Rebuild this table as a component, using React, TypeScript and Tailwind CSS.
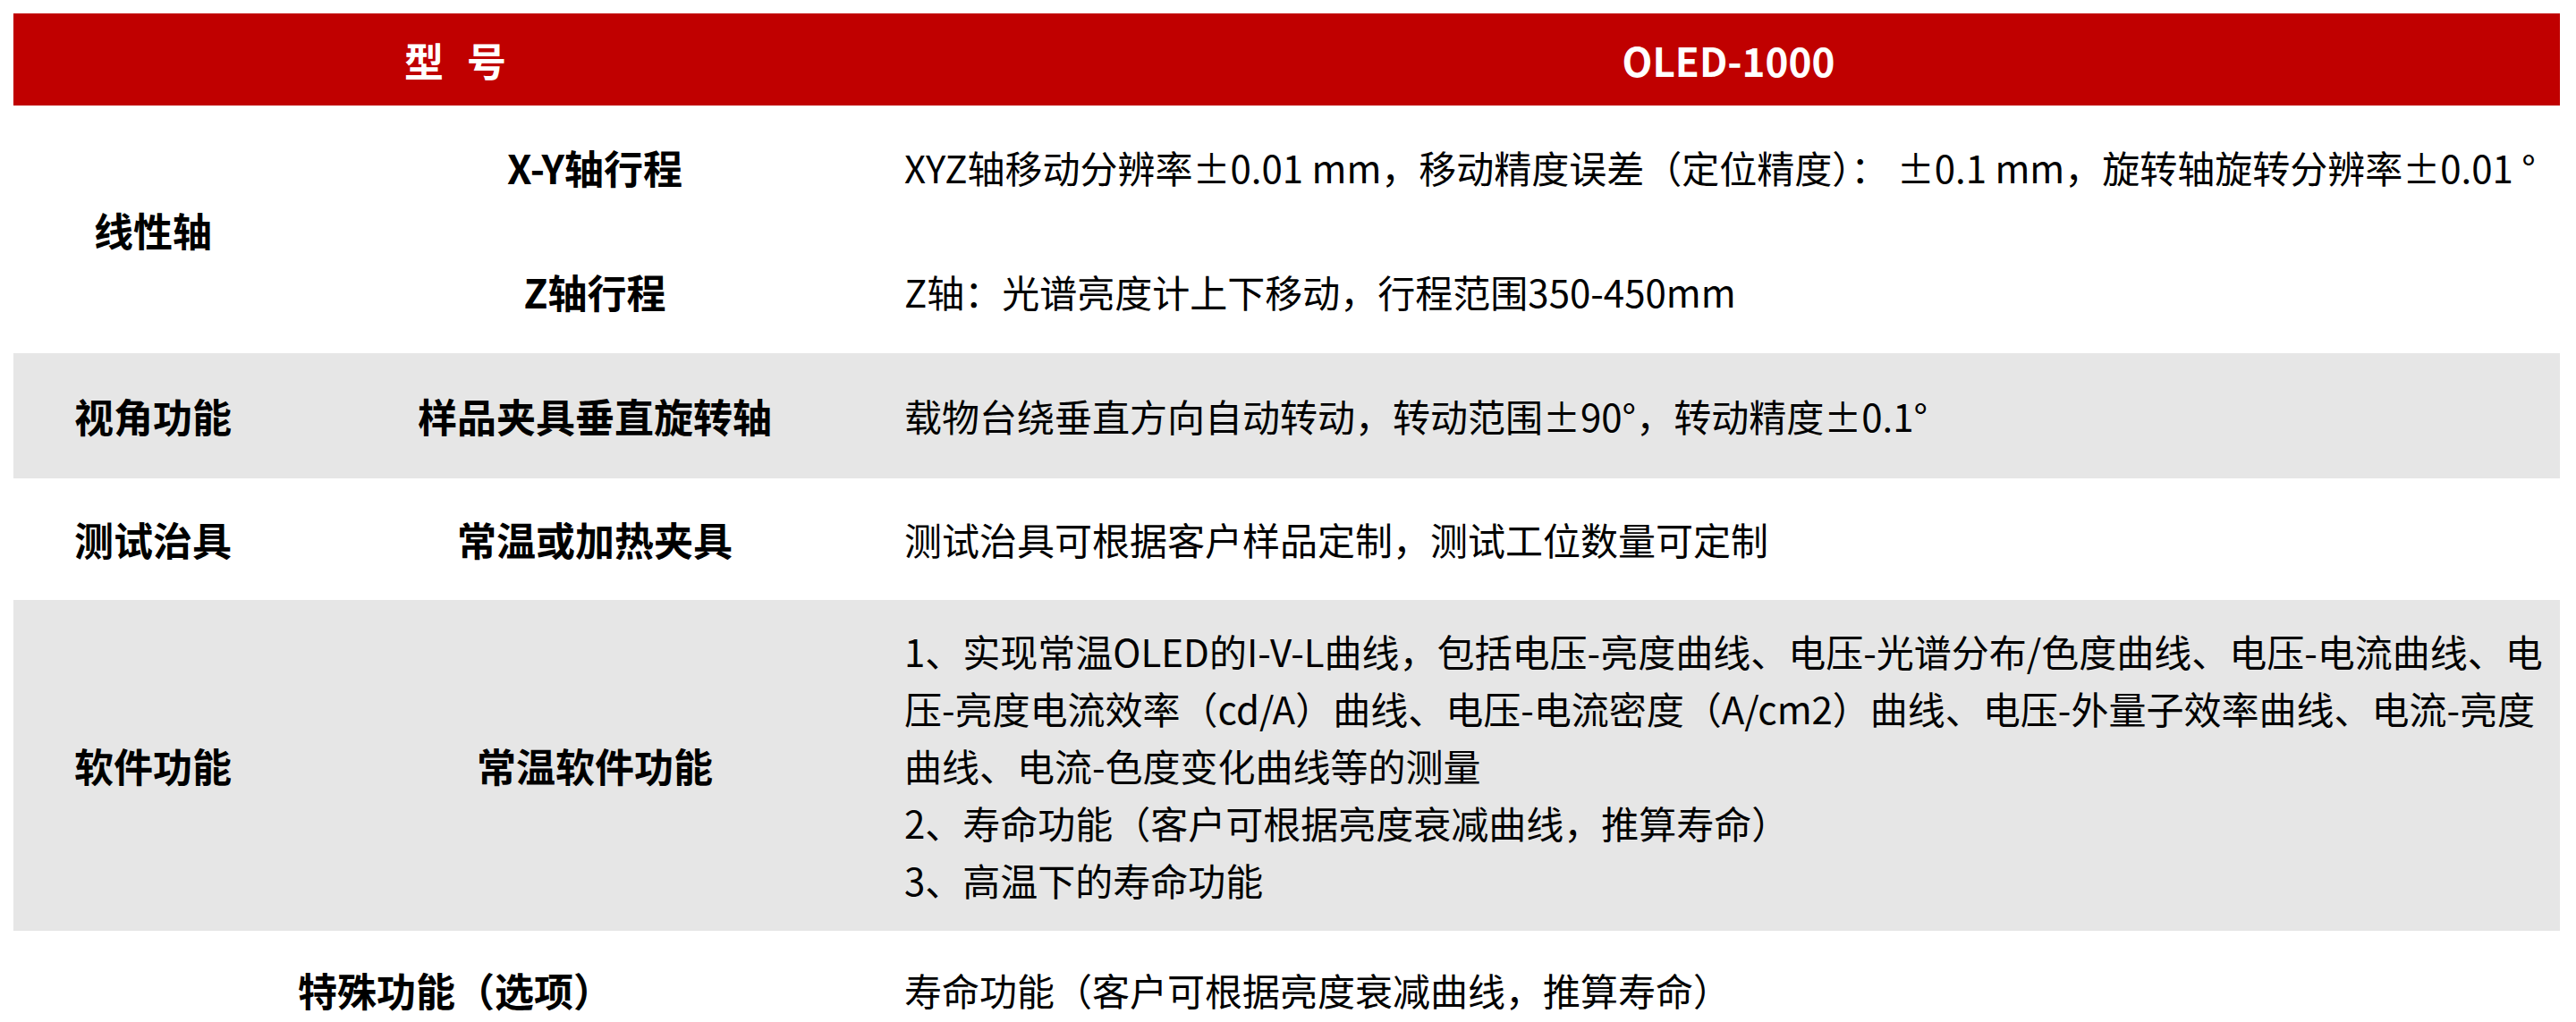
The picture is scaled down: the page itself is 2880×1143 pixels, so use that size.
const font = { fontFamily: '"Noto Sans CJK SC", "Noto Sans", sans-serif' };

const grid = 'grid grid-cols-[312px_676px_1fr]';

function Label({ children, className = '' }: { children: React.ReactNode; className?: string }) {
  return (
    <div className={`flex items-center justify-center text-center text-[44px] font-bold text-black ${className}`}>
      {children}
    </div>
  );
}

function Value({ children }: { children: React.ReactNode }) {
  return <div className="flex items-center pl-[8px] pr-[8px] text-black">{children}</div>;
}

export default function App() {
  return (
    <div className="min-h-screen bg-white pl-[15px] pr-[18px] pt-[15px] text-[42px] leading-[64px]" style={font}>
      {/* header */}
      <div className="grid h-[103px] grid-cols-[988px_1fr] bg-[#c00000] text-[44px] font-bold text-white">
        <div className="flex items-center justify-center">
          型<span className="ml-[26px]">号</span>
        </div>
        <div className="flex items-center justify-center">OLED-1000</div>
      </div>

      {/* 线性轴 */}
      <div className={`${grid} grid-rows-[138px_139px] bg-white`}>
        <Label className="row-span-2">线性轴</Label>
        <Label>X-Y轴行程</Label>
        <Value>XYZ轴移动分辨率±0.01 mm，移动精度误差（定位精度）： ±0.1 mm，旋转轴旋转分辨率±0.01 °</Value>
        <Label>Z轴行程</Label>
        <Value>Z轴：光谱亮度计上下移动，行程范围350-450mm</Value>
      </div>

      {/* 视角功能 */}
      <div className={`${grid} h-[140px] bg-[#e6e6e6]`}>
        <Label>视角功能</Label>
        <Label>样品夹具垂直旋转轴</Label>
        <Value>载物台绕垂直方向自动转动，转动范围±90°，转动精度±0.1°</Value>
      </div>

      {/* 测试治具 */}
      <div className={`${grid} h-[136px] bg-white`}>
        <Label>测试治具</Label>
        <Label>常温或加热夹具</Label>
        <Value>测试治具可根据客户样品定制，测试工位数量可定制</Value>
      </div>

      {/* 软件功能 */}
      <div className={`${grid} h-[370px] bg-[#e6e6e6]`}>
        <Label>软件功能</Label>
        <Label>常温软件功能</Label>
        <Value>
          <div>
            <p>
              1、实现常温OLED的I-V-L曲线，包括电压-亮度曲线、电压-光谱分布/色度曲线、电压-电流曲线、电压-亮度电流效率（cd/A）曲线、电压-电流密度（A/cm2）曲线、电压-外量子效率曲线、电流-亮度曲线、电流-色度变化曲线等的测量
            </p>
            <p>2、寿命功能（客户可根据亮度衰减曲线，推算寿命）</p>
            <p>3、高温下的寿命功能</p>
          </div>
        </Value>
      </div>

      {/* 特殊功能 */}
      <div className="grid h-[132px] grid-cols-[988px_1fr] bg-white">
        <Label>特殊功能（选项）</Label>
        <Value>寿命功能（客户可根据亮度衰减曲线，推算寿命）</Value>
      </div>
    </div>
  );
}
